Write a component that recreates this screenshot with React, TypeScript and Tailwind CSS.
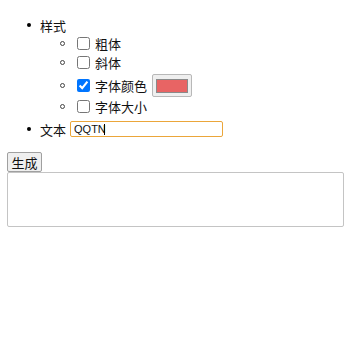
import React from "react";

const font = {
  fontFamily: '"Noto Sans CJK SC", "Liberation Sans", sans-serif',
};

function Circle() {
  return (
    <span className="ml-[53px] w-[5px] h-[5px] rounded-full border border-[#444] shrink-0" />
  );
}

function CheckRow({
  label,
  checked,
  height,
  children,
}: {
  label: string;
  checked?: boolean;
  height: string;
  children?: React.ReactNode;
}) {
  return (
    <li className={`flex items-center ${height}`}>
      <Circle />
      <input
        type="checkbox"
        defaultChecked={checked}
        className="ml-[12px] my-0 mr-0 w-[13px] h-[13px] shrink-0"
      />
      <span className="ml-[5px] leading-none">{label}</span>
      {children}
    </li>
  );
}

export default function App() {
  return (
    <div className="bg-white text-[#111] text-[13px] px-[7px] w-[360px] h-[360px]" style={font}>
      {/* Settings list */}
      <ul className="mt-[16px]">
        <li className="flex items-center h-[18px]">
          <span className="ml-[20px] w-[4px] h-[4px] rounded-full bg-black shrink-0" />
          <span className="ml-[9px] leading-none">样式</span>
        </li>
        <li>
          <ul>
            <CheckRow label="粗体" height="h-[18px]" />
            <CheckRow label="斜体" height="h-[20px]" />
            <CheckRow label="字体颜色" checked height="h-[27px]">
              <div className="ml-[5px] w-[40px] h-[23px] bg-[#efefef] border border-[#b8b8b8] rounded-[2px] flex items-center justify-center">
                <div className="w-[32px] h-[14px] bg-[#e86464] border border-[#8a8a8a]" />
              </div>
            </CheckRow>
            <CheckRow label="字体大小" height="h-[14px]" />
          </ul>
        </li>
        <li className="flex items-center h-[32px]">
          <span className="ml-[20px] w-[4px] h-[4px] rounded-full bg-black shrink-0" />
          <span className="ml-[9px] leading-none">文本</span>
          <div className="relative ml-[4px]">
            <input
              type="text"
              defaultValue="QQTN"
              className="block w-[153px] h-[16px] border-[1.5px] border-[#eba63a] rounded-[2px] pl-[3px] text-[11px] leading-none outline-none"
              style={{ fontFamily: '"Liberation Sans", sans-serif' }}
            />
            <span className="absolute left-[34px] top-[3px] w-px h-[11px] bg-black" />
          </div>
        </li>
      </ul>

      {/* Generate */}
      <button className="mt-[7px] block w-[35px] h-[20px] bg-[#efefef] border border-[#a0a0a0] rounded-[2px] text-[13px] leading-none">
        生成
      </button>
      <textarea className="block w-[337px] h-[55px] border border-[#c4c4c4] rounded-[2px] resize-none" />
    </div>
  );
}
